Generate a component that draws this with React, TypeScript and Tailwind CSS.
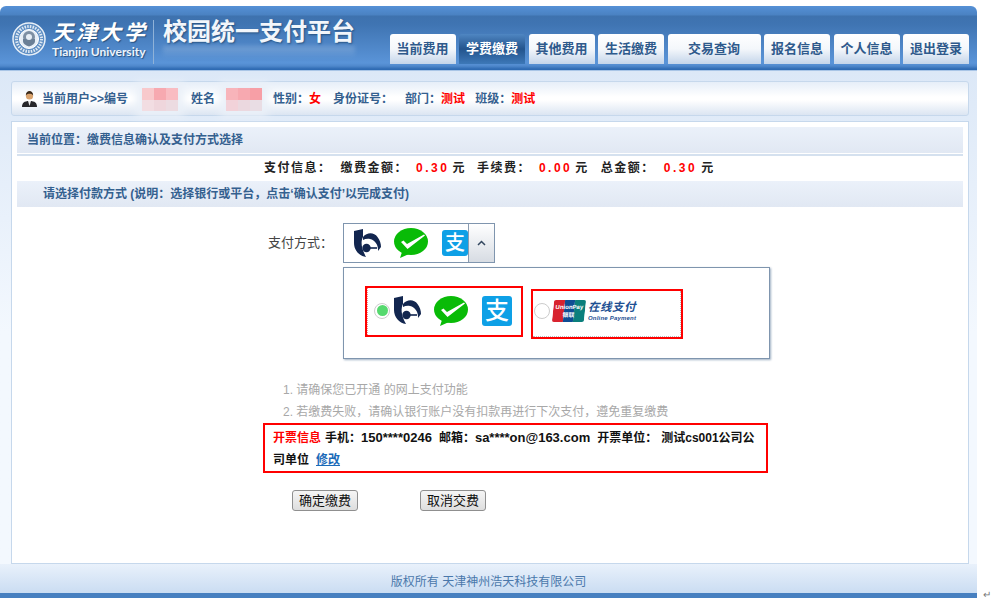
import React from "react";

const cjk = "font-['Liberation_Sans','Noto_Sans_CJK_SC',sans-serif]";

const tabs = [
  { label: "当前费用", width: "w-[66px]" },
  { label: "学费缴费", width: "w-[66px]", active: true },
  { label: "其他费用", width: "w-[66px]" },
  { label: "生活缴费", width: "w-[66px]" },
  { label: "交易查询", width: "w-[93px]" },
  { label: "报名信息", width: "w-[66px]" },
  { label: "个人信息", width: "w-[66px]" },
  { label: "退出登录", width: "w-[66px]" },
];

function Seal() {
  return (
    <svg width="34" height="34" viewBox="0 0 34 34" className="shrink-0">
      <circle cx="17" cy="17" r="16" fill="#5f8fc4" stroke="#e8f0f8" strokeWidth="1.500" />
      <circle cx="17" cy="17" r="12.500" fill="none" stroke="#dfe9f3" strokeWidth="3" strokeDasharray="1.500 1.200" />
      <circle cx="17" cy="17" r="9.500" fill="#e6eef6" stroke="#ffffff" strokeWidth="1" />
      <circle cx="17" cy="15" r="6" fill="#7d8fa3" />
      <path d="M11 17h12v2c0 3-3 4.500-6 5.500-3-1-6-2.500-6-5.500z" fill="#6a7f96" />
      <circle cx="17" cy="15" r="3" fill="#e6eef6" />
    </svg>
  );
}

function UserIcon() {
  return (
    <svg width="17" height="17" viewBox="0 0 17 17" className="shrink-0">
      <path d="M1 17c0-4 2-6 7.500-6S16 13 16 17z" fill="#26262a" />
      <path d="M7 11h3l-1.500 5z" fill="#e9e9e9" />
      <circle cx="8.500" cy="6" r="3.600" fill="#d9a36e" />
      <path d="M4.800 5.500C4.800 2.500 6.500 1 8.500 1s3.700 1.500 3.700 4.500C11 4 9.500 3.800 8.500 3.800S6 4 4.800 5.500z" fill="#3b2a1a" />
    </svg>
  );
}

function BankLogo() {
  return (
    <svg width="27" height="29" viewBox="0 0 27 29" className="shrink-0">
      <path d="M0 2 9 0v8c-2 4-2.500 10 3 20C5 27 0 21 0 14z" fill="#12264f" />
      <path d="M9 8c4-5 11-5 14.500 0 2.500 3 3.500 7 3.500 10l-3 4c.5-6-3-11-8-12-2.500-.5-5 0-7 1z" fill="#12264f" />
      <circle cx="12.500" cy="19" r="4.200" fill="#12264f" />
      <rect x="12.500" y="18.200" width="10.500" height="1.600" fill="#12264f" />
    </svg>
  );
}

function WechatLogo() {
  return (
    <svg width="34" height="30" viewBox="0 0 34 30" className="shrink-0">
      <ellipse cx="17" cy="13.500" rx="17" ry="13.500" fill="#09bb07" />
      <path d="M8 24 6 30l9-4z" fill="#09bb07" />
      <path d="M7 14l2.500-1.500L13 16 30 6.500l1 1L13.500 21z" fill="#fff" />
    </svg>
  );
}

function AlipayLogo({ size }: { size: number }) {
  return (
    <div
      className={`flex shrink-0 items-center justify-center overflow-hidden rounded-[3px] bg-[#0ea0e6] font-medium leading-none text-white ${cjk}`}
      style={{ width: size, height: size, fontSize: size - 6 }}
    >
      支
    </div>
  );
}

function Radio({ checked }: { checked?: boolean }) {
  return (
    <div className="flex h-[16px] w-[16px] shrink-0 items-center justify-center rounded-full border border-[#cccccc] bg-white">
      {checked && <div className="h-[11px] w-[11px] rounded-full bg-[#55d96e]" />}
    </div>
  );
}

function UnionPayLogo() {
  return (
    <div className="flex items-center gap-[3px]">
      <div className="relative flex h-[22px] w-[32px] -skew-x-6 overflow-hidden rounded-[2px]">
        <div className="w-[34%] bg-[#d8232f]" />
        <div className="w-[33%] bg-[#0e4d94]" />
        <div className="w-[33%] bg-[#0b7f7c]" />
        <div className={`absolute inset-0 flex flex-col items-center justify-center text-[6px] font-bold leading-[8px] text-white ${cjk}`}>
          <span>UnionPay</span>
          <span>银联</span>
        </div>
      </div>
      <div className="flex flex-col">
        <span className={`text-[11.500px] font-bold italic leading-[14px] tracking-[0.500px] text-[#1d4f92] ${cjk}`}>在线支付</span>
        <span className={`text-[6px] font-bold italic leading-[8px] tracking-[0.200px] text-[#1d4f92] ${cjk}`}>Online Payment</span>
      </div>
    </div>
  );
}

function SectionBar({ children, indent }: { children: React.ReactNode; indent: string }) {
  return (
    <div className={`flex h-[26px] items-center bg-gradient-to-b from-[#ebf1fa] to-[#e1e8f3] text-[12px] font-bold text-[#34608f] ${indent}`}>
      {children}
    </div>
  );
}

export default function App() {
  return (
    <div className={`relative h-[599px] w-[1002px] overflow-hidden bg-white pt-[6px] ${cjk}`}>
      <div className="flex h-[592px] w-[977px] flex-col overflow-hidden rounded-t-md">
        <header className="flex h-[64px] shrink-0 justify-between bg-[linear-gradient(#5590d6_0px,#4a82c2_9px,#3e72ae_10px,#3f74b2_18px,#5a94d8_57px,#4f88cc_60px,#2f6bb3_63px,#2f6bb3_64px)]">
          <div className="flex items-start pl-[12px] pt-[16px]">
            <Seal />
            <div className="ml-[6px] -mt-[5px] flex w-[96px] flex-col">
              <span className="whitespace-nowrap font-['Noto_Sans_CJK_SC',serif] text-[21px] font-bold italic leading-[28px] tracking-[3px] text-white [text-shadow:1px_1px_1px_#25507f]">
                天津大学
              </span>
              <span className="whitespace-nowrap font-['Lato',sans-serif] text-[12px] font-bold leading-[14px] text-[#eef4fb] [text-shadow:1px_1px_1px_#25507f]">
                Tianjin University
              </span>
            </div>
            <div className="ml-[5px] -mt-[2px] h-[44px] w-[1px] bg-[#8fb2d8]" />
            <div className="relative ml-[9px] -mt-[5px]">
              <span className="block text-[24px] font-bold leading-[30px] text-[#f2f6fb] [text-shadow:1px_1px_2px_#25507f]">
                校园统一支付平台
              </span>
              <div aria-hidden="true" className="absolute left-0 right-0 top-[29px] h-[12px] bg-gradient-to-b from-white/20 to-transparent blur-[2px]" />
            </div>
          </div>
          <nav className="flex items-start gap-[3.500px] pr-[8px] pt-[28px]">
            {tabs.map((tab) =>
              tab.active ? (
                <div
                  key={tab.label}
                  className={`flex h-[30px] items-center justify-center rounded-t-[3px] bg-gradient-to-b from-[#4f86c2] via-[#23548d] to-[#3d78b8] text-[13px] font-bold text-white ${tab.width}`}
                >
                  {tab.label}
                </div>
              ) : (
                <div
                  key={tab.label}
                  className={`flex h-[30px] items-center justify-center rounded-t-[3px] bg-gradient-to-b from-[#ffffff] via-[#f4f7fb] to-[#c4d5ea] text-[13px] font-bold text-[#2f5a8c] ${tab.width}`}
                >
                  {tab.label}
                </div>
              ),
            )}
          </nav>
        </header>

        <div className="flex min-h-0 flex-1 flex-col bg-gradient-to-b from-[#dce8f7] via-[#f3f8fe] to-[#f3f8fe]">
          <div className="h-[1px] shrink-0 bg-[#a9c5e6]" />
          <div className="flex-1 pl-[11px] pr-[8px] pt-[10px]">
            <div className="relative flex h-[35px] items-center rounded-[3px] border border-[#c6d8ec] bg-[linear-gradient(#e6eef8,#ffffff_45%,#ffffff_55%,#dbe5f2)] pl-[9px] text-[12px] font-bold text-[#34608f]">
              <UserIcon />
              <span className="ml-[4px]">当前用户&gt;&gt;编号</span>
              <span className="ml-[14px] w-[36px]" />
              <span className="ml-[13px]">姓名</span>
              <span className="ml-[9px] w-[36px]" />
              <span className="ml-[13px]">
                性别：<span className="text-[#ff0000]">女</span>
              </span>
              <span className="ml-[12px]">身份证号：</span>
              <span className="ml-[12px]">
                部门：<span className="text-[#ff0000]">测试</span>
              </span>
              <span className="ml-[10px]">
                班级：<span className="text-[#ff0000]">测试</span>
              </span>
              <div className="absolute left-[130px] top-[6px] grid h-[23px] w-[36px] grid-cols-3 grid-rows-2 shadow-[0_0_8px_6px_#eaf0f8]">
                <div className="bg-[#f8c9cc]" />
                <div className="bg-[#f7a9b0]" />
                <div className="bg-[#f9bcc2]" />
                <div className="bg-[#f2dde2]" />
                <div className="bg-[#efd6dc]" />
                <div className="bg-[#ecdbe1]" />
              </div>
              <div className="absolute left-[214px] top-[6px] grid h-[23px] w-[36px] grid-cols-3 grid-rows-2 shadow-[0_0_8px_6px_#eaf0f8]">
                <div className="bg-[#f8b4ba]" />
                <div className="bg-[#f7a9b0]" />
                <div className="bg-[#f79fa6]" />
                <div className="bg-[#f2d2d9]" />
                <div className="bg-[#ebd8df]" />
                <div className="bg-[#e9dde4]" />
              </div>
            </div>

            <main className="mt-[5px] h-[443px] border border-[#c6d8ec] bg-white px-[5px] pt-[5px]">
              <div className="border-b-2 border-[#d5e1ef] pb-[1px]">
                <SectionBar indent="pl-[10px]">当前位置：缴费信息确认及支付方式选择</SectionBar>
              </div>

              <div className="flex h-[25px] items-center pb-[2px] pl-[247px] text-[12px] font-bold tracking-[1.500px] text-[#222222]">
                <span>支付信息：</span>
                <span className="ml-[9px]">缴费金额：</span>
                <span className="ml-[8px] tracking-[2.500px] text-[#ff0000]">0.30</span>
                <span className="ml-[3px]">元</span>
                <span className="ml-[11px]">手续费：</span>
                <span className="ml-[8px] tracking-[2.500px] text-[#ff0000]">0.00</span>
                <span className="ml-[3px]">元</span>
                <span className="ml-[12px]">总金额：</span>
                <span className="ml-[9px] tracking-[2.500px] text-[#ff0000]">0.30</span>
                <span className="ml-[4px]">元</span>
              </div>

              <SectionBar indent="pl-[26px]">请选择付款方式 (说明：选择银行或平台，点击‘确认支付’以完成支付)</SectionBar>

              <div className="ml-[251px] mt-[16px] flex items-center">
                <span className="w-[75px] text-[13px] text-[#444444]">支付方式：</span>
                <div className="flex h-[40px] w-[152px] items-center border border-[#7f95ae] bg-white pl-[10px]">
                  <BankLogo />
                  <div className="ml-[13px]">
                    <WechatLogo />
                  </div>
                  <div className="ml-[14px]">
                    <AlipayLogo size={26} />
                  </div>
                  <div className="ml-auto flex h-full w-[26px] items-center justify-center border-l border-[#8a9bb0] bg-gradient-to-b from-[#ffffff] to-[#d7dce3] text-[#33475f]">
                    <svg width="9" height="6" viewBox="0 0 9 6">
                      <path d="M1 5 4.500 1.500 8 5" fill="none" stroke="currentColor" strokeWidth="1.500" />
                    </svg>
                  </div>
                </div>
              </div>

              <div className="ml-[326px] mt-[4px] flex h-[92px] w-[427px] items-start border border-[#7f95ae] bg-white pl-[21px] pt-[18px] shadow-[1px_1px_2px_#9fb0c4]">
                <div className="flex h-[51px] w-[158px] border-2 border-[#ff0000]">
                  <div className="flex w-full items-center border-l border-dotted border-[#f08a8a] pl-[6px] pb-[2px]">
                    <Radio checked />
                    <div className="ml-[4px]">
                      <BankLogo />
                    </div>
                    <div className="ml-[13px]">
                      <WechatLogo />
                    </div>
                    <div className="ml-[14px]">
                      <AlipayLogo size={30} />
                    </div>
                  </div>
                </div>
                <div className="ml-[8px] mt-[3px] flex h-[50px] w-[152px] border-2 border-[#ff0000]">
                  <div className="flex w-full items-center border-b border-r border-dotted border-[#bbbbbb] pb-[6px] pl-[1px]">
                    <Radio />
                    <div className="ml-[3px]">
                      <UnionPayLogo />
                    </div>
                  </div>
                </div>
              </div>

              <div className="ml-[266px] mt-[22px] flex flex-col gap-[4px] text-[12px] leading-[18px] text-[#a8a8a8]">
                <span>1. 请确保您已开通 的网上支付功能</span>
                <span>2. 若缴费失败，请确认银行账户没有扣款再进行下次支付，遵免重复缴费</span>
              </div>

              <div className="ml-[246px] mt-[2px] h-[50px] w-[505px] border-2 border-[#ff0000] px-[8px] pt-[2px] text-[12px] font-bold leading-[22px] text-[#111111]">
                <div className="flex whitespace-nowrap">
                  <span className="text-[#ff0000]">开票信息</span>
                  <span className="ml-[4px]">手机：</span>
                  <span className="text-[13px]">150****0246</span>
                  <span className="ml-[7px]">邮箱：</span>
                  <span className="text-[13px]">sa****on@163.com</span>
                  <span className="ml-[7px]">开票单位：</span>
                  <span className="ml-[4px]">测试cs001公司公</span>
                </div>
                <div className="flex whitespace-nowrap">
                  <span>司单位</span>
                  <a className="ml-[7px] text-[#1a6ab8] underline">修改</a>
                </div>
              </div>

              <div className="ml-[275px] mt-[17px] flex gap-[62px]">
                <button className="h-[21px] w-[66px] rounded-[3px] border border-[#8f8f8f] bg-gradient-to-b from-[#f5f5f5] to-[#dedede] text-[13px] text-[#111111]">
                  确定缴费
                </button>
                <button className="h-[21px] w-[66px] rounded-[3px] border border-[#8f8f8f] bg-gradient-to-b from-[#f5f5f5] to-[#dedede] text-[13px] text-[#111111]">
                  取消交费
                </button>
              </div>
            </main>
          </div>
          <footer className="flex h-[30px] shrink-0 items-center justify-center bg-gradient-to-b from-[#e9f1fb] to-[#c9dcf2] pt-[6px] text-[12px] text-[#4a78ab]">
            版权所有 天津神州浩天科技有限公司
          </footer>
        </div>
        <div className="h-[5px] shrink-0 bg-[#4780c0]" />
      </div>
      <span className="absolute left-[983px] top-[589px] text-[10px] leading-[12px] text-[#777777]">↵</span>
    </div>
  );
}
